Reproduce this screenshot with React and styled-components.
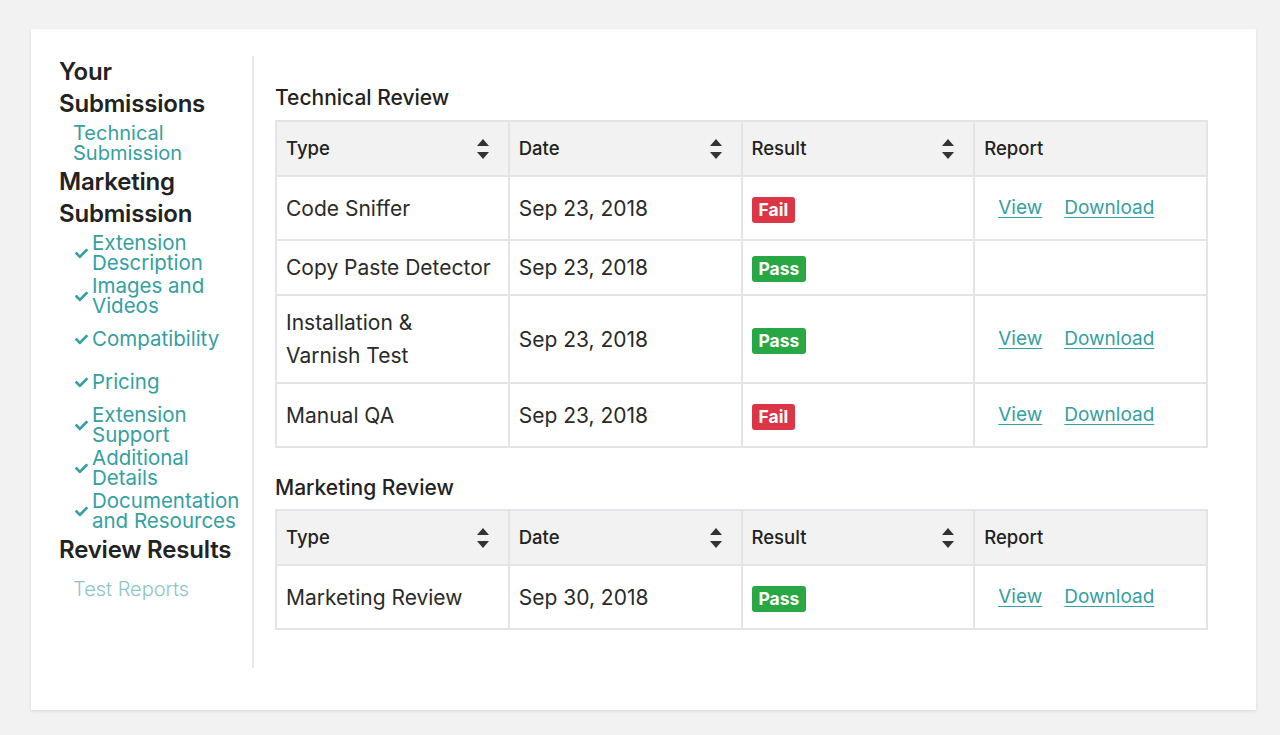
import React from "react";
import styled, { createGlobalStyle } from "styled-components";
import { FaCheck } from "react-icons/fa";

const GlobalStyle = createGlobalStyle`
  body {
    margin: 0;
    background: #f2f2f2;
    font-family: "Inter", "Liberation Sans", sans-serif;
    color: #303030;
  }
`;

const Page = styled.div`
  padding: 29px 24px 25px 31px;
`;

const Card = styled.div`
  background: #fff;
  width: 1225px;
  height: 681px;
  box-sizing: border-box;
  padding: 27px 48px 42px 28px;
  display: flex;
  box-shadow: 0 1px 3px rgba(0, 0, 0, 0.12);
`;

const Sidebar = styled.nav`
  width: 195px;
  flex-shrink: 0;
  border-right: 2px solid #e8e8ec;
  box-sizing: border-box;
`;

const SideHeading = styled.div`
  font-size: 24px;
  font-weight: 600;
  line-height: 32px;
  color: #222;
  letter-spacing: -0.2px;
`;

const SideLink = styled.a`
  display: flex;
  align-items: center;
  height: 40px;
  margin: 3px 0;
  padding-left: ${(p) => (p.$check ? "16px" : "14px")};
  gap: 4px;
  font-size: ${(p) => (p.$check ? "20.5px" : "20px")};
  line-height: 20px;
  color: ${(p) => (p.$muted ? "#8dc5c6" : "#35a0a1")};
  font-weight: ${(p) => (p.$muted ? 300 : 400)};
  text-decoration: none;
  cursor: pointer;
  svg {
    flex-shrink: 0;
  }
`;

const Main = styled.main`
  flex: 1;
  margin-left: 21px;
  padding-top: 28px;
`;

const SectionTitle = styled.h2`
  margin: ${(p) => (p.$first ? "0 0 8px" : "26px 0 7px")};
  font-size: 21px;
  font-weight: 500;
  line-height: 28px;
  color: #222;
`;

const Table = styled.table`
  width: 100%;
  border-collapse: collapse;
  table-layout: fixed;
  border: 2px solid #e3e3e8;
`;

const Th = styled.th`
  background: #f2f2f2;
  border: 2px solid #e3e3e8;
  padding: 11px 9px;
  text-align: left;
  font-size: 18.5px;
  font-weight: 500;
  line-height: 31px;
  color: #222;
`;

const HeadInner = styled.div`
  display: flex;
  align-items: center;
  justify-content: space-between;
  padding-right: 9px;
`;

const Td = styled.td`
  border: 2px solid #e3e3e8;
  padding: 10px 9px 10px ${(p) => (p.$report ? "12px" : "9px")};
  font-size: 21px;
  line-height: 33px;
  color: #2a2a2a;
  vertical-align: middle;
  white-space: pre-line;
`;

const Badge = styled.span`
  display: inline-block;
  padding: 0 7px;
  border-radius: 3px;
  font-size: 17.5px;
  font-weight: 700;
  line-height: 26px;
  color: #fff;
  background: ${(p) => (p.$pass ? "#28a745" : "#dc3545")};
`;

const ReportLink = styled.a`
  display: inline-block;
  padding: 4px 11px 5px;
  font-size: 19px;
  line-height: 33px;
  color: #35a0a1;
  text-decoration: underline;
  text-underline-offset: 3px;
  cursor: pointer;
`;

const SortIcon = () => (
  <svg width="14" height="22" viewBox="0 0 14 22">
    <path d="M7 1 L13 8 H1 Z" fill="#333" />
    <path d="M7 21 L13 14 H1 Z" fill="#333" />
  </svg>
);

const SortHeader = ({ children, sortable }) => (
  <Th>
    {sortable ? (
      <HeadInner>
        {children}
        <SortIcon />
      </HeadInner>
    ) : (
      children
    )}
  </Th>
);

const technical = [
  { type: "Code Sniffer", date: "Sep 23, 2018", pass: false, links: true },
  { type: "Copy Paste Detector", date: "Sep 23, 2018", pass: true, links: false },
  { type: "Installation &\nVarnish Test", date: "Sep 23, 2018", pass: true, links: true },
  { type: "Manual QA", date: "Sep 23, 2018", pass: false, links: true },
];

const marketing = [
  { type: "Marketing Review", date: "Sep 30, 2018", pass: true, links: true },
];

const ReviewTable = ({ rows }) => (
  <Table>
    <thead>
      <tr>
        <SortHeader sortable>Type</SortHeader>
        <SortHeader sortable>Date</SortHeader>
        <SortHeader sortable>Result</SortHeader>
        <SortHeader>Report</SortHeader>
      </tr>
    </thead>
    <tbody>
      {rows.map((r) => (
        <tr key={r.type}>
          <Td>{r.type}</Td>
          <Td>{r.date}</Td>
          <Td>
            <Badge $pass={r.pass}>{r.pass ? "Pass" : "Fail"}</Badge>
          </Td>
          <Td $report>
            {r.links && (
              <>
                <ReportLink>View</ReportLink>
                <ReportLink>Download</ReportLink>
              </>
            )}
          </Td>
        </tr>
      ))}
    </tbody>
  </Table>
);

const checkItems = [
  "Extension Description",
  "Images and Videos",
  "Compatibility",
  "Pricing",
  "Extension Support",
  "Additional Details",
  "Documentation and Resources",
];

export default function App() {
  return (
    <Page>
      <GlobalStyle />
      <Card>
        <Sidebar>
          <SideHeading>Your Submissions</SideHeading>
          <SideLink>Technical Submission</SideLink>
          <SideHeading>Marketing Submission</SideHeading>
          {checkItems.map((item) => (
            <SideLink key={item} $check>
              <FaCheck size={13} />
              <span>{item}</span>
            </SideLink>
          ))}
          <SideHeading>Review Results</SideHeading>
          <SideLink $muted>Test Reports</SideLink>
        </Sidebar>
        <Main>
          <SectionTitle $first>Technical Review</SectionTitle>
          <ReviewTable rows={technical} />
          <SectionTitle>Marketing Review</SectionTitle>
          <ReviewTable rows={marketing} />
        </Main>
      </Card>
    </Page>
  );
}
